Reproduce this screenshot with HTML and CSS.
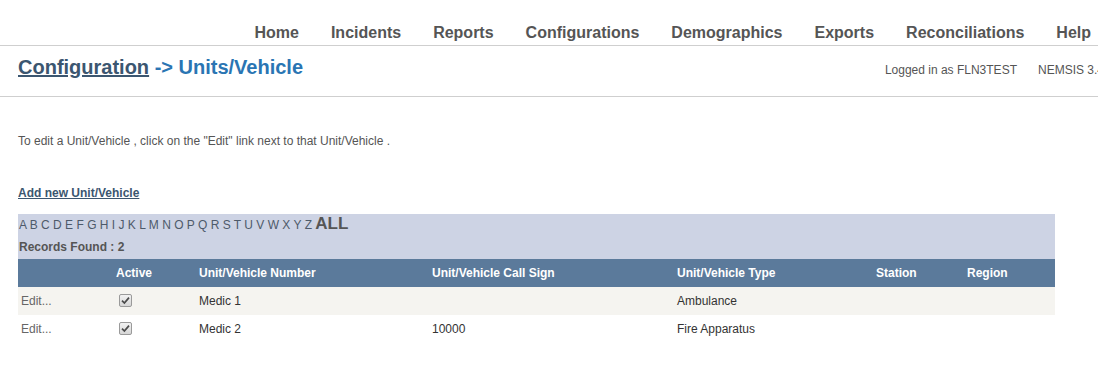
FILE: index.html
```html
<!DOCTYPE html>
<html lang="en">
<head>
    <meta charset="UTF-8">
    <title>Configuration - Units/Vehicle</title>
    <link rel="stylesheet" href="styles.css">
</head>
<body>
    <nav class="topnav">
        <a href="#">Home</a>
        <a href="#">Incidents</a>
        <a href="#">Reports</a>
        <a href="#">Configurations</a>
        <a href="#">Demographics</a>
        <a href="#">Exports</a>
        <a href="#">Reconciliations</a>
        <a href="#">Help</a>
    </nav>
    <div class="titlebar">
        <h1 class="page-title"><a href="#">Configuration</a> <span>-&gt; Units/Vehicle</span></h1>
        <div class="userinfo">
            <span>Logged in as FLN3TEST</span>
            <span>NEMSIS 3.4.0</span>
        </div>
    </div>

    <div class="content">
        <p class="hint">To edit a Unit/Vehicle , click on the "Edit" link next to that Unit/Vehicle .</p>
        <p class="addnew"><a href="#">Add new Unit/Vehicle</a></p>

        <div class="grid">
            <div class="filter">
                <div class="letters">
                    <a href="#">A</a> <a href="#">B</a> <a href="#">C</a> <a href="#">D</a> <a href="#">E</a> <a href="#">F</a> <a href="#">G</a> <a href="#">H</a> <a href="#">I</a> <a href="#">J</a> <a href="#">K</a> <a href="#">L</a> <a href="#">M</a> <a href="#">N</a> <a href="#">O</a> <a href="#">P</a> <a href="#">Q</a> <a href="#">R</a> <a href="#">S</a> <a href="#">T</a> <a href="#">U</a> <a href="#">V</a> <a href="#">W</a> <a href="#">X</a> <a href="#">Y</a> <a href="#">Z</a> <a href="#" class="all">ALL</a>
                </div>
                <div class="records">Records Found : 2</div>
            </div>
            <table class="units">
                <colgroup>
                    <col style="width:95px">
                    <col style="width:83px">
                    <col style="width:233px">
                    <col style="width:245px">
                    <col style="width:199px">
                    <col style="width:91px">
                    <col style="width:91px">
                </colgroup>
                <thead>
                    <tr>
                        <th></th>
                        <th>Active</th>
                        <th>Unit/Vehicle Number</th>
                        <th>Unit/Vehicle Call Sign</th>
                        <th>Unit/Vehicle Type</th>
                        <th>Station</th>
                        <th>Region</th>
                    </tr>
                </thead>
                <tbody>
                    <tr>
                        <td><a href="#" class="edit">Edit...</a></td>
                        <td><span class="check"><svg width="9" height="9" viewBox="0 0 9 9"><path d="M1 4.6 L3.4 7 L8 1.6" fill="none" stroke="#4a4a4a" stroke-width="1.7"/></svg></span></td>
                        <td>Medic 1</td>
                        <td></td>
                        <td>Ambulance</td>
                        <td></td>
                        <td></td>
                    </tr>
                    <tr>
                        <td><a href="#" class="edit">Edit...</a></td>
                        <td><span class="check"><svg width="9" height="9" viewBox="0 0 9 9"><path d="M1 4.6 L3.4 7 L8 1.6" fill="none" stroke="#4a4a4a" stroke-width="1.7"/></svg></span></td>
                        <td>Medic 2</td>
                        <td>10000</td>
                        <td>Fire Apparatus</td>
                        <td></td>
                        <td></td>
                    </tr>
                </tbody>
            </table>
        </div>
    </div>
</body>
</html>
```

FILE: styles.css
```css
html, body {
    overflow-x: hidden;
}
body {
    margin: 0;
    font-family: "Liberation Sans", Arial, sans-serif;
    color: #555;
    background: #fff;
}
.topnav {
    display: flex;
    justify-content: flex-end;
    gap: 32px;
    height: 46px;
    box-sizing: border-box;
    padding: 23px 7px 0 0;
    border-bottom: 1px solid #cfcfcf;
}
.topnav a {
    font-size: 16px;
    line-height: 20px;
    font-weight: bold;
    color: #555;
    text-decoration: none;
}
.titlebar {
    display: flex;
    align-items: baseline;
    height: 51px;
    box-sizing: border-box;
    padding: 9px 0 0 18px;
    border-bottom: 1px solid #cfcfcf;
}
.page-title {
    margin: 0;
    font-size: 20px;
    line-height: 24px;
    font-weight: bold;
}
.page-title a {
    color: #3b5670;
    text-decoration: underline;
}
.page-title span {
    color: #2a75b3;
}
.userinfo {
    margin-left: auto;
    margin-right: -16px;
    display: flex;
    gap: 21px;
    white-space: nowrap;
    font-size: 12px;
    color: #555;
}
.content {
    padding: 0 0 0 18px;
}
.hint {
    margin: 36px 0 0;
    font-size: 12px;
    line-height: 16px;
}
.addnew {
    margin: 36px 0 0;
    font-size: 12px;
    line-height: 16px;
    font-weight: bold;
}
.addnew a {
    color: #3b5670;
    text-decoration: underline;
}
.grid {
    width: 1037px;
    margin-top: 13px;
}
.filter {
    background: #cdd3e4;
    padding: 0 0 4px 1px;
}
.letters {
    height: 22px;
    font-size: 12px;
    line-height: 20px;
    white-space: nowrap;
}
.letters a {
    color: #4d5a6a;
    text-decoration: none;
}
.letters a.all {
    font-size: 17px;
    font-weight: bold;
    color: #555;
}
.records {
    margin-top: 3px;
    font-size: 12px;
    line-height: 16px;
    font-weight: bold;
    color: #555;
}
.units {
    width: 1037px;
    table-layout: fixed;
    border-collapse: collapse;
    font-size: 12px;
}
.units th {
    height: 28px;
    padding: 0 3px;
    background: #5b7a9b;
    color: #fff;
    text-align: left;
    font-weight: bold;
}
.units td {
    height: 28px;
    padding: 0 3px;
    color: #333;
}
.units tbody tr:nth-child(odd) td {
    background: #f5f4f0;
}
.edit {
    color: #666;
    text-decoration: none;
}
.check {
    display: inline-block;
    width: 11px;
    height: 11px;
    margin: 0 0 0 3px;
    border: 1px solid #9a9a9a;
    border-radius: 2px;
    background: linear-gradient(#f2f2f2, #d6d6d6);
    vertical-align: middle;
    position: relative;
    top: -1px;
}
.check svg {
    display: block;
    margin: 1px;
}
```
